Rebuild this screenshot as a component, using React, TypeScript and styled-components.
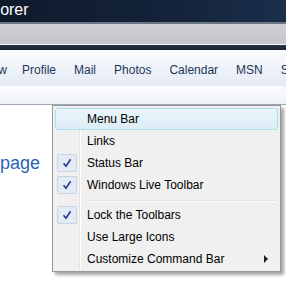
import styled, { createGlobalStyle } from "styled-components"

const GlobalStyle = createGlobalStyle`
  html, body {
    margin: 0;
    padding: 0;
    overflow: hidden;
    background: #ffffff;
  }
  body {
    font-family: "Liberation Sans", Arial, sans-serif;
  }
`

const Frame = styled.div`
  position: relative;
  width: 286px;
  height: 281px;
  overflow: hidden;
  background: #ffffff;
  display: flex;
  flex-direction: column;
`

const TitleBar = styled.div`
  height: 22px;
  background: linear-gradient(90deg, #0f1a2b 0%, #14233a 60%, #1b2f4b 100%);
  color: #ffffff;
  font-size: 16px;
  line-height: 20px;
  white-space: nowrap;
  overflow: hidden;
`

const TitleText = styled.span`
  display: inline-block;
  margin-left: -31px;
`

const AddressBand = styled.div`
  height: 20px;
  border-top: 2px solid #6b7584;
  border-bottom: 1px solid #f4f5f6;
  background: linear-gradient(180deg, #cfd1d4 0%, #c4c6c9 100%);
`

const DarkStrip = styled.div`
  height: 5px;
  background: linear-gradient(180deg, #2b3546 0%, #1a2230 100%);
`

const LinksBar = styled.div`
  height: 36px;
  display: flex;
  align-items: center;
  white-space: nowrap;
  overflow: hidden;
  background: linear-gradient(180deg, #fbfcfe 0%, #eef2f9 55%, #e4e9f4 100%);
`

const LinkItem = styled.span<{ $first?: boolean }>`
  font-size: 12px;
  color: #1e3557;
  padding: 3px 9px 0 9px;
  margin-left: ${({ $first }) => ($first ? "-26px" : "0")};
  margin-right: ${({ $first }) => ($first ? "-3px" : "0")};
`

const CommandBand = styled.div`
  height: 18px;
  border-bottom: 1px solid #9ea7b8;
  background: linear-gradient(180deg, #fafbfd 0%, #eef1f8 100%);
`

const Content = styled.div`
  flex: 1;
  padding: 48px 0 0 0;
  background: #ffffff;
`

const PageLink = styled.span`
  font-size: 18px;
  color: #2b63b5;
`

const Menu = styled.div`
  position: absolute;
  left: 52px;
  top: 105px;
  width: 223px;
  padding: 2px 2px 1px 2px;
  background: #f0f0f0;
  border: 1px solid #979797;
  box-shadow: 3px 3px 3px rgba(0, 0, 0, 0.35);
  font-size: 12px;
  color: #000000;

  &::before {
    content: "";
    position: absolute;
    top: 2px;
    bottom: 2px;
    left: 26px;
    width: 1px;
    background: #e2e3e3;
    box-shadow: 1px 0 0 #ffffff;
  }
`

const Item = styled.div<{ $hot?: boolean }>`
  position: relative;
  height: 22px;
  display: flex;
  align-items: center;
  box-sizing: border-box;
  border: 1px solid ${({ $hot }) => ($hot ? "#aeddf0" : "transparent")};
  border-radius: 3px;
  background: ${({ $hot }) =>
    $hot ? "linear-gradient(180deg, #eaf5fb 0%, #dcedf6 100%)" : "transparent"};
  z-index: 1;
`

const IconCell = styled.div`
  width: 22px;
  height: 20px;
  display: flex;
  align-items: center;
  justify-content: center;
`

const CheckBox = styled.div`
  width: 20px;
  height: 18px;
  box-sizing: border-box;
  border: 1px solid #c7d3e4;
  border-radius: 2px;
  background: #e4ebf6;
  display: flex;
  align-items: center;
  justify-content: center;
`

const Label = styled.span`
  margin-left: 9px;
  flex: 1;
`

const Arrow = styled.span`
  width: 0;
  height: 0;
  border-top: 4px solid transparent;
  border-bottom: 4px solid transparent;
  border-left: 4px solid #222222;
  margin-right: 9px;
`

const Separator = styled.div`
  position: relative;
  z-index: 1;
  height: 8px;
  display: flex;
  align-items: center;
  padding-left: 31px;
  padding-right: 3px;

  &::after {
    content: "";
    flex: 1;
    height: 1px;
    background: #e0e0e0;
    box-shadow: 0 1px 0 #ffffff;
  }
`

const Check = () => (
  <svg width="10" height="10" viewBox="0 0 10 10">
    <path d="M1.5 5.2 L4 8.2 L8.6 1.2" fill="none" stroke="#1f3a8f" strokeWidth="1.6" />
  </svg>
)

interface MenuEntry {
  label: string
  checked?: boolean
  hot?: boolean
  submenu?: boolean
}

const topEntries: MenuEntry[] = [
  { label: "Menu Bar", hot: true },
  { label: "Links" },
  { label: "Status Bar", checked: true },
  { label: "Windows Live Toolbar", checked: true },
]

const bottomEntries: MenuEntry[] = [
  { label: "Lock the Toolbars", checked: true },
  { label: "Use Large Icons" },
  { label: "Customize Command Bar", submenu: true },
]

const MenuRow = ({ entry }: { entry: MenuEntry }): JSX.Element => (
  <Item $hot={entry.hot}>
    <IconCell>
      {entry.checked && (
        <CheckBox>
          <Check />
        </CheckBox>
      )}
    </IconCell>
    <Label>{entry.label}</Label>
    {entry.submenu && <Arrow />}
  </Item>
)

const links = ["Profile", "Mail", "Photos", "Calendar", "MSN", "Spaces"]

const App = (): JSX.Element => (
  <>
    <GlobalStyle />
    <Frame>
      <TitleBar>
        <TitleText>Explorer</TitleText>
      </TitleBar>
      <AddressBand />
      <DarkStrip />
      <LinksBar>
        <LinkItem $first>New</LinkItem>
        {links.map((l) => (
          <LinkItem key={l}>{l}</LinkItem>
        ))}
      </LinksBar>
      <CommandBand />
      <Content>
        <PageLink>page</PageLink>
      </Content>
      <Menu>
        {topEntries.map((e) => (
          <MenuRow key={e.label} entry={e} />
        ))}
        <Separator />
        {bottomEntries.map((e) => (
          <MenuRow key={e.label} entry={e} />
        ))}
      </Menu>
    </Frame>
  </>
)

export default App
